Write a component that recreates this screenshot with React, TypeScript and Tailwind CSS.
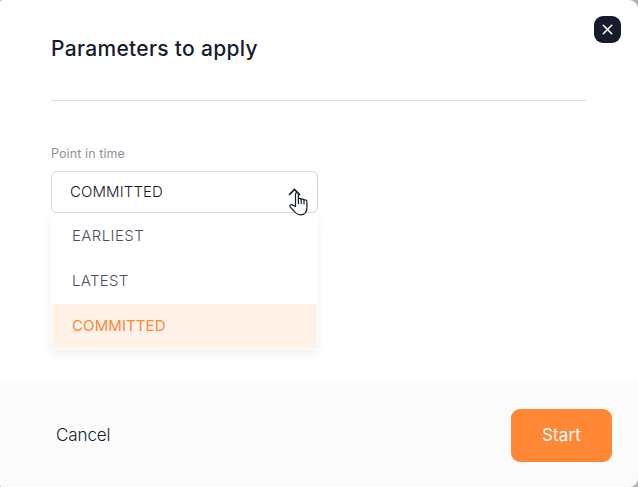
const options = [
  { label: "EARLIEST", spacing: "tracking-[0.4px]" },
  { label: "LATEST", spacing: "tracking-[0.3px]" },
  { label: "COMMITTED", spacing: "tracking-[0.1px]" },
];

function CloseButton() {
  return (
    <button aria-label="Close" className="flex size-[27px] items-center justify-center rounded-[9px] bg-[#161c2d]">
      <svg width="11" height="11" viewBox="0 0 11 11" fill="none" stroke="#fff" strokeWidth="1.6" strokeLinecap="round">
        <path d="M1.3 1.3L9.7 9.7M9.7 1.3L1.3 9.7" />
      </svg>
    </button>
  );
}

function HandPointer() {
  return (
    <svg className="absolute top-[19px] right-[9px]" width="19" height="25" viewBox="0 0 19 25" fill="#fff" stroke="#161c2d" strokeWidth="1.2" strokeLinejoin="round" strokeLinecap="round">
      <path d="M6.5 15.5V3.2C6.5 1 9.4 1 9.4 3.2V7.7C10.3 6.9 12 7.2 12.2 8.5C13.2 7.7 14.8 8 15 9.2C16.5 8.4 17.9 9 17.9 10.5V16.5C17.9 21.2 15.2 23.8 11.5 23.8C8.6 23.8 6.8 22.3 5 20L1.3 16.2C-.1 14.5 1.7 13.1 3.4 13.9Z" />
      <path d="M9.4 8V12.5M12.2 8.6V12.5M15 9.4V13" />
    </svg>
  );
}

export default function App() {
  return (
    <div className="h-[487px] w-[638px] bg-[#b4b4b6] font-['Inter','Liberation_Sans',sans-serif] text-[#161c2d]">
      <div className="flex h-full flex-col overflow-hidden rounded-tl-[3px] rounded-tr-[9px] rounded-br-[9px] rounded-bl-[3px] bg-white">
        <header className="flex h-[100px] items-start justify-between pt-4 pr-[17px] pl-[51px]">
          <h1 className="pt-[17px] text-[21px] leading-8 font-medium tracking-[0.3px]">Parameters to apply</h1>
          <CloseButton />
        </header>
        <hr className="mr-[52px] ml-[51px] border-t border-[#dcdcdd]" />
        <main className="flex-1 pt-[43px] pl-[51px]">
          <label className="block h-[27px] text-[12.5px] leading-5 tracking-[0.1px] text-[#8f9199]">Point in time</label>
          <div className="relative flex h-[42px] w-[267px] items-center justify-between rounded-[6px] border border-[#d5d6da] bg-white pr-[16px] pl-[18px]">
            <span className="text-[15px] leading-5 font-light tracking-[0.1px]">COMMITTED</span>
            <svg width="13" height="8" viewBox="0 0 13 8" fill="none" stroke="#161c2d" strokeWidth="1.7">
              <path d="M1 7L6.5 1.5L12 7" />
            </svg>
            <HandPointer />
          </div>
          <ul className="w-[267px] bg-white px-px pb-px text-[15px] shadow-[0_3px_8px_rgba(0,0,0,0.07)]">
            {options.map((o, i) => (
              <li key={o.label} className={`flex h-[45px] items-center pl-5 ${o.spacing} ${i === 0 ? "mt-px" : ""} ${i === 2 ? "bg-[#fff2e8] font-normal text-[#ff8735]" : "font-light text-[#4a4f60]"}`}>
                {o.label}
              </li>
            ))}
          </ul>
        </main>
        <footer className="flex h-[104px] items-center justify-between bg-[#fbfbfb] pr-[26px] pl-[56px]">
          <button className="pt-0.5 text-[17px] font-light tracking-[-0.1px]">Cancel</button>
          <button className="h-[53px] w-[101px] rounded-[9px] bg-[#ff8735] pt-px text-[17px] tracking-[0.1px] text-white">Start</button>
        </footer>
      </div>
    </div>
  );
}
